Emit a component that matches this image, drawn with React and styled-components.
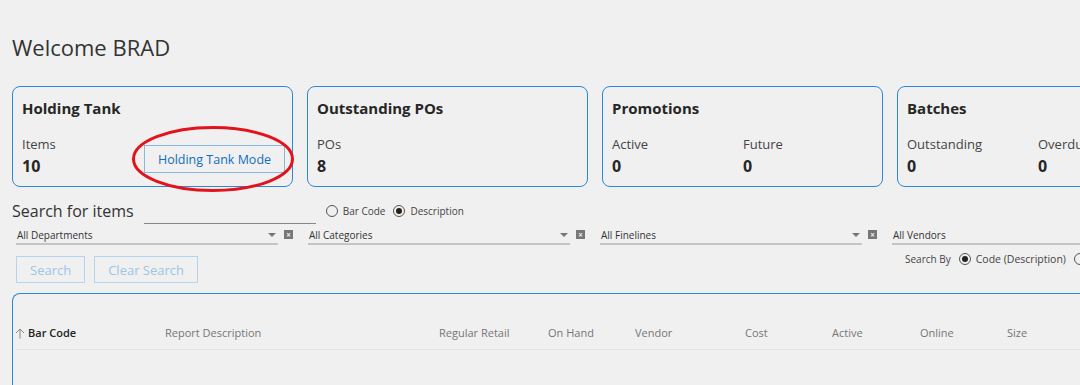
import React from 'react'
import styled, { createGlobalStyle } from 'styled-components'

const GlobalStyle = createGlobalStyle`
  html, body {
    margin: 0;
    padding: 0;
    background: #f0f0f0;
    overflow: hidden;
  }
  body {
    font-family: 'Open Sans', 'Noto Sans', sans-serif;
    color: #333;
  }
`

const Page = styled.div`
  width: 1080px;
  height: 385px;
  overflow: hidden;
  padding: 0 0 0 12px;
  box-sizing: border-box;
`

const Welcome = styled.h1`
  margin: 0;
  padding-top: 33px;
  height: 86px;
  box-sizing: border-box;
  font-size: 22px;
  font-weight: 400;
  color: #333;
  line-height: 28px;
`

const Cards = styled.div`
  display: grid;
  grid-template-columns: repeat(4, 281px);
  column-gap: 14px;
`

const Card = styled.div`
  position: relative;
  height: 101px;
  box-sizing: border-box;
  border: 1px solid #2b88d8;
  border-radius: 8px;
  padding: 10px 9px 0;
`

const CardTitle = styled.div`
  font-size: 15px;
  font-weight: 700;
  color: #262626;
  line-height: 22px;
`

const Stats = styled.div`
  display: grid;
  grid-template-columns: 131px 131px;
  margin-top: 16px;
`

const Stat = styled.div`
  display: flex;
  flex-direction: column;
`

const StatLabel = styled.span`
  font-size: 13px;
  color: #444;
  line-height: 18px;
  white-space: nowrap;
`

const StatValue = styled.span`
  margin-top: 2px;
  font-size: 16px;
  font-weight: 700;
  color: #262626;
  line-height: 22px;
`

const ModeButton = styled.button`
  position: absolute;
  left: 131px;
  top: 58px;
  width: 141px;
  height: 28px;
  border: 1px solid #86b8e2;
  background: #f0f0f0;
  color: #106ebe;
  font-family: inherit;
  font-size: 12.5px;
  padding: 0;
`

const Highlight = styled.svg`
  position: absolute;
  left: 119px;
  top: 39px;
  overflow: visible;
  pointer-events: none;
`

const SearchRow = styled.div`
  display: flex;
  align-items: center;
  margin-top: 12px;
  height: 24px;
`

const SearchLabel = styled.span`
  font-size: 16px;
  color: #333;
  line-height: 22px;
`

const SearchInput = styled.div`
  align-self: flex-end;
  width: 172px;
  height: 20px;
  margin-left: 10px;
  margin-bottom: -1px;
  border-bottom: 1px solid #888;
`

const RadioGroup = styled.div`
  display: flex;
  align-items: center;
  gap: 8px;
  margin-left: ${p => p.$offset || 10}px;
`

const RadioItem = styled.label`
  display: flex;
  align-items: center;
  gap: 5px;
  font-size: ${p => p.$size || 10}px;
  color: #444;
  white-space: nowrap;
`

const RadioDot = styled.span`
  width: 10px;
  height: 10px;
  border-radius: 50%;
  border: 1px solid #555;
  display: flex;
  align-items: center;
  justify-content: center;
  &::after {
    content: '';
    width: 6px;
    height: 6px;
    border-radius: 50%;
    background: ${p => (p.$on ? '#222' : 'transparent')};
  }
`

const Filters = styled.div`
  display: grid;
  grid-template-columns: repeat(4, 292px);
  margin-top: 3px;
  margin-left: 4px;
`

const Filter = styled.div`
  display: flex;
  align-items: center;
`

const Combo = styled.div`
  position: relative;
  width: 262px;
  height: 19px;
  border-bottom: 2px solid #c4c4c4;
  font-size: 10px;
  color: #333;
  line-height: 18px;
  padding-left: 1px;
  box-sizing: border-box;
  white-space: nowrap;
  &::after {
    content: '';
    position: absolute;
    right: 2px;
    top: 7px;
    border-left: 4px solid transparent;
    border-right: 4px solid transparent;
    border-top: 4px solid ${p => (p.$noArrow ? 'transparent' : '#777')};
  }
`

const ClearBox = styled.span`
  width: 9px;
  height: 9px;
  margin-left: 6px;
  margin-bottom: 2px;
  background: #777;
  color: #eee;
  font-size: 8px;
  line-height: 9px;
  text-align: center;
  font-weight: 700;
`

const ActionRow = styled.div`
  display: grid;
  grid-template-columns: 893px auto;
  align-items: start;
  margin-top: 11px;
  height: 27px;
`

const Buttons = styled.div`
  display: flex;
  gap: 9px;
  margin-left: 4px;
`

const GhostButton = styled.button`
  height: 27px;
  padding: 0 13px;
  border: 1px solid #b4d3ec;
  background: transparent;
  color: #9cc5e6;
  font-family: inherit;
  font-size: 13px;
`

const SearchBy = styled.div`
  display: flex;
  align-items: center;
  margin-top: -4px;
  font-size: 10px;
  color: #444;
  white-space: nowrap;
`

const Grid = styled.div`
  margin-top: 10px;
  width: 1100px;
  height: 120px;
  border-top: 1px solid #2b88d8;
  border-left: 1px solid #2b88d8;
  border-top-left-radius: 8px;
  padding-top: 30px;
  box-sizing: border-box;
`

const HeaderRow = styled.div`
  display: grid;
  grid-template-columns: 150px 274px 109px 87px 110px 87px 88px 87px 80px;
  height: 25px;
  align-items: start;
  border-bottom: 1px solid #e2e2e2;
  margin-left: 2px;
`

const HeaderCell = styled.span`
  font-size: 11px;
  line-height: 18px;
  color: ${p => (p.$active ? '#222' : '#767676')};
  font-weight: ${p => (p.$active ? 600 : 400)};
  white-space: nowrap;
  display: flex;
  align-items: center;
  gap: 3px;
`

const columns = ['Report Description', 'Regular Retail', 'On Hand', 'Vendor', 'Cost', 'Active', 'Online', 'Size']

const filters = ['All Departments', 'All Categories', 'All Finelines', 'All Vendors']

export default function App() {
  return (
    <>
      <GlobalStyle />
      <Page>
        <Welcome>Welcome BRAD</Welcome>
        <Cards>
          <Card>
            <CardTitle>Holding Tank</CardTitle>
            <Stats>
              <Stat>
                <StatLabel>Items</StatLabel>
                <StatValue>10</StatValue>
              </Stat>
            </Stats>
            <ModeButton>Holding Tank Mode</ModeButton>
            <Highlight width="162" height="66" viewBox="0 0 162 66">
              <ellipse cx="81" cy="33" rx="79.5" ry="31.5" fill="none" stroke="#e3131b" strokeWidth="3" />
            </Highlight>
          </Card>
          <Card>
            <CardTitle>Outstanding POs</CardTitle>
            <Stats>
              <Stat>
                <StatLabel>POs</StatLabel>
                <StatValue>8</StatValue>
              </Stat>
            </Stats>
          </Card>
          <Card>
            <CardTitle>Promotions</CardTitle>
            <Stats>
              <Stat>
                <StatLabel>Active</StatLabel>
                <StatValue>0</StatValue>
              </Stat>
              <Stat>
                <StatLabel>Future</StatLabel>
                <StatValue>0</StatValue>
              </Stat>
            </Stats>
          </Card>
          <Card>
            <CardTitle>Batches</CardTitle>
            <Stats>
              <Stat>
                <StatLabel>Outstanding</StatLabel>
                <StatValue>0</StatValue>
              </Stat>
              <Stat>
                <StatLabel>Overdue</StatLabel>
                <StatValue>0</StatValue>
              </Stat>
            </Stats>
          </Card>
        </Cards>

        <SearchRow>
          <SearchLabel>Search for items</SearchLabel>
          <SearchInput />
          <RadioGroup $offset={10}>
            <RadioItem><RadioDot />Bar Code</RadioItem>
            <RadioItem><RadioDot $on />Description</RadioItem>
          </RadioGroup>
        </SearchRow>

        <Filters>
          {filters.map((f, i) => (
            <Filter key={f}>
              <Combo $noArrow={i === 3}>{f}</Combo>
              {i < 3 && <ClearBox>×</ClearBox>}
            </Filter>
          ))}
        </Filters>

        <ActionRow>
          <Buttons>
            <GhostButton>Search</GhostButton>
            <GhostButton>Clear Search</GhostButton>
          </Buttons>
          <SearchBy>
            <span>Search By</span>
            <RadioGroup $offset={8}>
              <RadioItem $size={10.5}><RadioDot $on />Code (Description)</RadioItem>
              <RadioItem $size={10.5}><RadioDot />Description</RadioItem>
            </RadioGroup>
          </SearchBy>
        </ActionRow>

        <Grid>
          <HeaderRow>
            <HeaderCell $active>
              <svg width="10" height="11" viewBox="0 0 10 11">
                <path d="M5 10.5V1M1 5l4-4 4 4" fill="none" stroke="#888" strokeWidth="1" />
              </svg>
              Bar Code
            </HeaderCell>
            {columns.map(c => (
              <HeaderCell key={c}>{c}</HeaderCell>
            ))}
          </HeaderRow>
        </Grid>
      </Page>
    </>
  )
}
